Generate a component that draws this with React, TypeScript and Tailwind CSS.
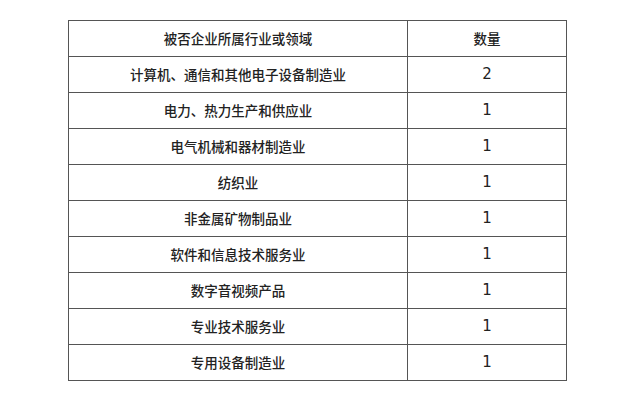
const rows: [string, string][] = [
  ['计算机、通信和其他电子设备制造业', '2'],
  ['电力、热力生产和供应业', '1'],
  ['电气机械和器材制造业', '1'],
  ['纺织业', '1'],
  ['非金属矿物制品业', '1'],
  ['软件和信息技术服务业', '1'],
  ['数字音视频产品', '1'],
  ['专业技术服务业', '1'],
  ['专用设备制造业', '1'],
]

export default function App() {
  return (
    <div
      className="w-[640px] h-[405px] bg-white pt-[20px] pl-[68px]"
      style={{ fontFamily: '"Noto Sans CJK SC", "Liberation Sans", sans-serif' }}
    >
      <table className="w-[499px] border-collapse text-[13.5px] font-medium text-[#222]">
        <thead>
          <tr className="h-[36px]">
            <th className="w-[339px] border border-[#555] font-medium text-center">被否企业所属行业或领域</th>
            <th className="border border-[#555] font-medium text-center">数量</th>
          </tr>
        </thead>
        <tbody>
          {rows.map(([name, count]) => (
            <tr key={name} className="h-[36px]">
              <td className="border border-[#555] text-center">{name}</td>
              <td className="border border-[#555] text-center font-['DejaVu_Sans',sans-serif] font-normal text-[15px]">
                {count}
              </td>
            </tr>
          ))}
        </tbody>
      </table>
    </div>
  )
}
